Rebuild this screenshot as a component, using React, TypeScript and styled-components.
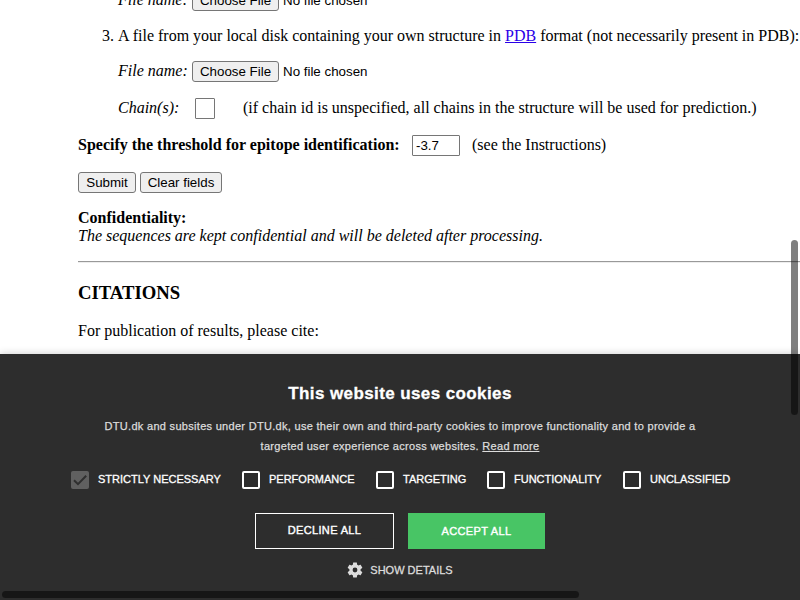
import React from "react";
import styled, { createGlobalStyle } from "styled-components";

const Global = createGlobalStyle`
  html, body { margin: 0; padding: 0; overflow: hidden; background: #fff; }
  *, *::before, *::after { box-sizing: border-box; }
`;

const Page = styled.div`
  position: relative;
  width: 800px;
  height: 600px;
  overflow: hidden;
  display: flex;
  flex-direction: column;
  background: #fff;
`;

const Content = styled.main`
  height: 354px;
  flex: none;
  overflow: hidden;
  padding-left: 78px;
  font: 16px/18px "Liberation Serif", serif;
  color: #000;
  white-space: nowrap;
`;

const Line = styled.div<{ $top?: number; $indent?: number }>`
  display: flex;
  align-items: baseline;
  height: 21px;
  margin-top: ${(p) => p.$top ?? 0}px;
  padding-left: ${(p) => p.$indent ?? 0}px;
`;

const Gap = styled.span<{ $w: number }>`
  flex: none;
  width: ${(p) => p.$w}px;
`;

const Label = styled.em<{ $w: number }>`
  flex: none;
  width: ${(p) => p.$w}px;
`;

const Threshold = styled.strong`
  flex: none;
  width: 334px;
`;

const Button = styled.button<{ $w: number }>`
  flex: none;
  width: ${(p) => p.$w}px;
  height: 21px;
  padding: 0;
  border: 1px solid #767676;
  border-radius: 3px;
  background: #efefef;
  color: #000;
  font: 13.33px/18px "Liberation Sans", sans-serif;
  text-align: center;
`;

const FileStatus = styled.span`
  margin-left: 4px;
  font: 13.33px/18px "Liberation Sans", sans-serif;
`;

const Field = styled.input<{ $w: number }>`
  flex: none;
  width: ${(p) => p.$w}px;
  height: 21px;
  padding: 0 3px;
  border: 1px solid #767676;
  border-radius: 1px;
  background: #fff;
  color: #000;
  font: 13.33px/18px "Liberation Sans", sans-serif;
`;

const Link = styled.a`
  color: #2a00e8;
  text-decoration: underline;
`;

const ListItem = styled.div`
  height: 18px;
  margin-top: 16px;
  padding-left: 24px;
`;

const Marker = styled.span`
  display: inline-block;
  width: 16px;
`;

const Privacy = styled.div`
  height: 36px;
  margin-top: 16px;
`;

const Rule = styled.hr`
  height: 2px;
  margin: 16px 0 0;
  border: 0;
  border-top: 1px solid #999;
  border-bottom: 1px solid #ededed;
`;

const Heading = styled.h3`
  height: 21px;
  margin: 19px 0 0;
  font-size: 18.72px;
  line-height: 21px;
`;

const Cite = styled.p`
  margin: 19px 0 0;
`;

const Banner = styled.section`
  position: relative;
  flex: none;
  height: 246px;
  display: flex;
  flex-direction: column;
  align-items: center;
  background: #2d2d2d;
  box-shadow: 0 0 8px rgba(0, 0, 0, 0.2);
  color: #fff;
  font: 11px/20px "Liberation Sans", sans-serif;
  white-space: nowrap;
`;

const Title = styled.h2`
  height: 24px;
  margin: 28px 0 0;
  font-size: 17px;
  line-height: 24px;
  letter-spacing: 0.4px;
  -webkit-text-stroke: 0.3px #fff;
`;

const Message = styled.p`
  margin: 10px 0 0;
  height: 40px;
  text-align: center;
  letter-spacing: 0.3px;
  color: #dcdcdc;
  -webkit-text-stroke: 0.25px #dcdcdc;
`;

const More = styled.a`
  text-decoration: underline;
  text-underline-offset: 1px;
`;

const Options = styled.div`
  display: grid;
  grid-template-columns: 171px 134px 111px 136px 107px;
  width: 659px;
  height: 20px;
  margin: 13px 0 0 1px;
`;

const Option = styled.div`
  display: flex;
  gap: 9px;
  align-items: center;
`;

const Box = styled.span<{ $on?: boolean }>`
  flex: none;
  display: flex;
  width: 18px;
  height: 18px;
  margin-top: 2px;
  border: ${(p) => (p.$on ? "0" : "2px solid #fff")};
  border-radius: 2px;
  background: ${(p) => (p.$on ? "#606060" : "transparent")};
`;

const Caption = styled.span`
  -webkit-text-stroke: 0.3px currentColor;
`;

const Actions = styled.div`
  display: flex;
  gap: 14px;
  margin-top: 24px;
`;

const Action = styled.button<{ $accept?: boolean }>`
  width: ${(p) => (p.$accept ? 137 : 139)}px;
  height: 36px;
  padding: ${(p) => (p.$accept ? "0 0 1px" : "0 0 3px")};
  border: ${(p) => (p.$accept ? "0" : "1px solid #fff")};
  background: ${(p) => (p.$accept ? "#48c565" : "transparent")};
  color: #fff;
  font: 11px/20px "Liberation Sans", sans-serif;
  letter-spacing: 0.35px;
  -webkit-text-stroke: 0.4px #fff;
`;

const Details = styled.div`
  display: flex;
  align-items: center;
  gap: 6px;
  height: 20px;
  margin: 11px 1px 0 0;
  color: #dcdcdc;
`;

const ScrollThumb = styled.div<{ $axis: "x" | "y" }>`
  position: absolute;
  border-radius: 4px;
  background: rgba(0, 0, 0, 0.5);
  ${(p) =>
    p.$axis === "y"
      ? "left: 791px; top: 240px; width: 7px; height: 175px;"
      : "left: 2px; top: 591px; width: 577px; height: 7px;"}
`;

const Gear = () => (
  <svg width="18" height="18" viewBox="0 0 24 24" fill="#dcdcdc">
    <path d="M19.43 12.98c.04-.32.07-.64.07-.98s-.03-.66-.07-.98l2.11-1.65c.19-.15.24-.42.12-.64l-2-3.46c-.12-.22-.39-.3-.61-.22l-2.49 1c-.52-.4-1.08-.73-1.69-.98l-.38-2.65C14.46 2.18 14.25 2 14 2h-4c-.25 0-.46.18-.49.42l-.38 2.65c-.61.25-1.17.59-1.69.98l-2.49-1c-.23-.09-.49 0-.61.22l-2 3.46c-.13.22-.07.49.12.64l2.11 1.65c-.04.32-.07.65-.07.98s.03.66.07.98l-2.11 1.65c-.19.15-.24.42-.12.64l2 3.46c.12.22.39.3.61.22l2.49-1c.52.4 1.08.73 1.69.98l.38 2.65c.03.24.24.42.49.42h4c.25 0 .46-.18.49-.42l.38-2.65c.61-.25 1.17-.59 1.69-.98l2.49 1c.23.09.49 0 .61-.22l2-3.46c.12-.22.07-.49-.12-.64l-2.11-1.65zM12 15.2a3.2 3.2 0 1 1 0-6.4 3.2 3.2 0 0 1 0 6.4z" />
  </svg>
);

const Check = () => (
  <svg width="18" height="18" viewBox="0 0 18 18" fill="none">
    <path d="M3 9.2L7 13.2L15.2 4.8" stroke="#2f2f2f" strokeWidth="2" />
  </svg>
);

const options = ["STRICTLY NECESSARY", "PERFORMANCE", "TARGETING", "FUNCTIONALITY", "UNCLASSIFIED"];

const FileRow = ({ top }: { top: number }) => (
  <Line $top={top} $indent={40}>
    <Label $w={74}>File name:</Label>
    <Button $w={87}>Choose File</Button>
    <FileStatus>No file chosen</FileStatus>
  </Line>
);

export default function App() {
  return (
    <Page>
      <Global />
      <Content>
        <FileRow top={-10} />
        <ListItem>
          <Marker>3.</Marker>A file from your local disk containing your own structure in <Link>PDB</Link> format
          (not necessarily present in PDB):
        </ListItem>
        <FileRow top={16} />
        <Line $top={16} $indent={40}>
          <Label $w={77}>Chain(s):</Label>
          <Field $w={20} readOnly value="" />
          <Gap $w={28} />
          <span>(if chain id is unspecified, all chains in the structure will be used for prediction.)</span>
        </Line>
        <Line $top={16}>
          <Threshold>Specify the threshold for epitope identification:</Threshold>
          <Field $w={48} readOnly value="-3.7" />
          <Gap $w={12} />
          <span>(see the Instructions)</span>
        </Line>
        <Line $top={16}>
          <Button $w={58}>Submit</Button>
          <Gap $w={4} />
          <Button $w={82}>Clear fields</Button>
        </Line>
        <Privacy>
          <strong>Confidentiality:</strong>
          <br />
          <em>The sequences are kept confidential and will be deleted after processing.</em>
        </Privacy>
        <Rule />
        <Heading>CITATIONS</Heading>
        <Cite>For publication of results, please cite:</Cite>
      </Content>
      <Banner>
        <Title>This website uses cookies</Title>
        <Message>
          DTU.dk and subsites under DTU.dk, use their own and third-party cookies to improve functionality and to
          provide a<br />
          targeted user experience across websites. <More>Read more</More>
        </Message>
        <Options>
          {options.map((name, i) => (
            <Option key={name}>
              <Box $on={i === 0}>{i === 0 && <Check />}</Box>
              <Caption>{name}</Caption>
            </Option>
          ))}
        </Options>
        <Actions>
          <Action>DECLINE ALL</Action>
          <Action $accept>ACCEPT ALL</Action>
        </Actions>
        <Details>
          <Gear />
          <Caption>SHOW DETAILS</Caption>
        </Details>
      </Banner>
      <ScrollThumb $axis="y" />
      <ScrollThumb $axis="x" />
    </Page>
  );
}
